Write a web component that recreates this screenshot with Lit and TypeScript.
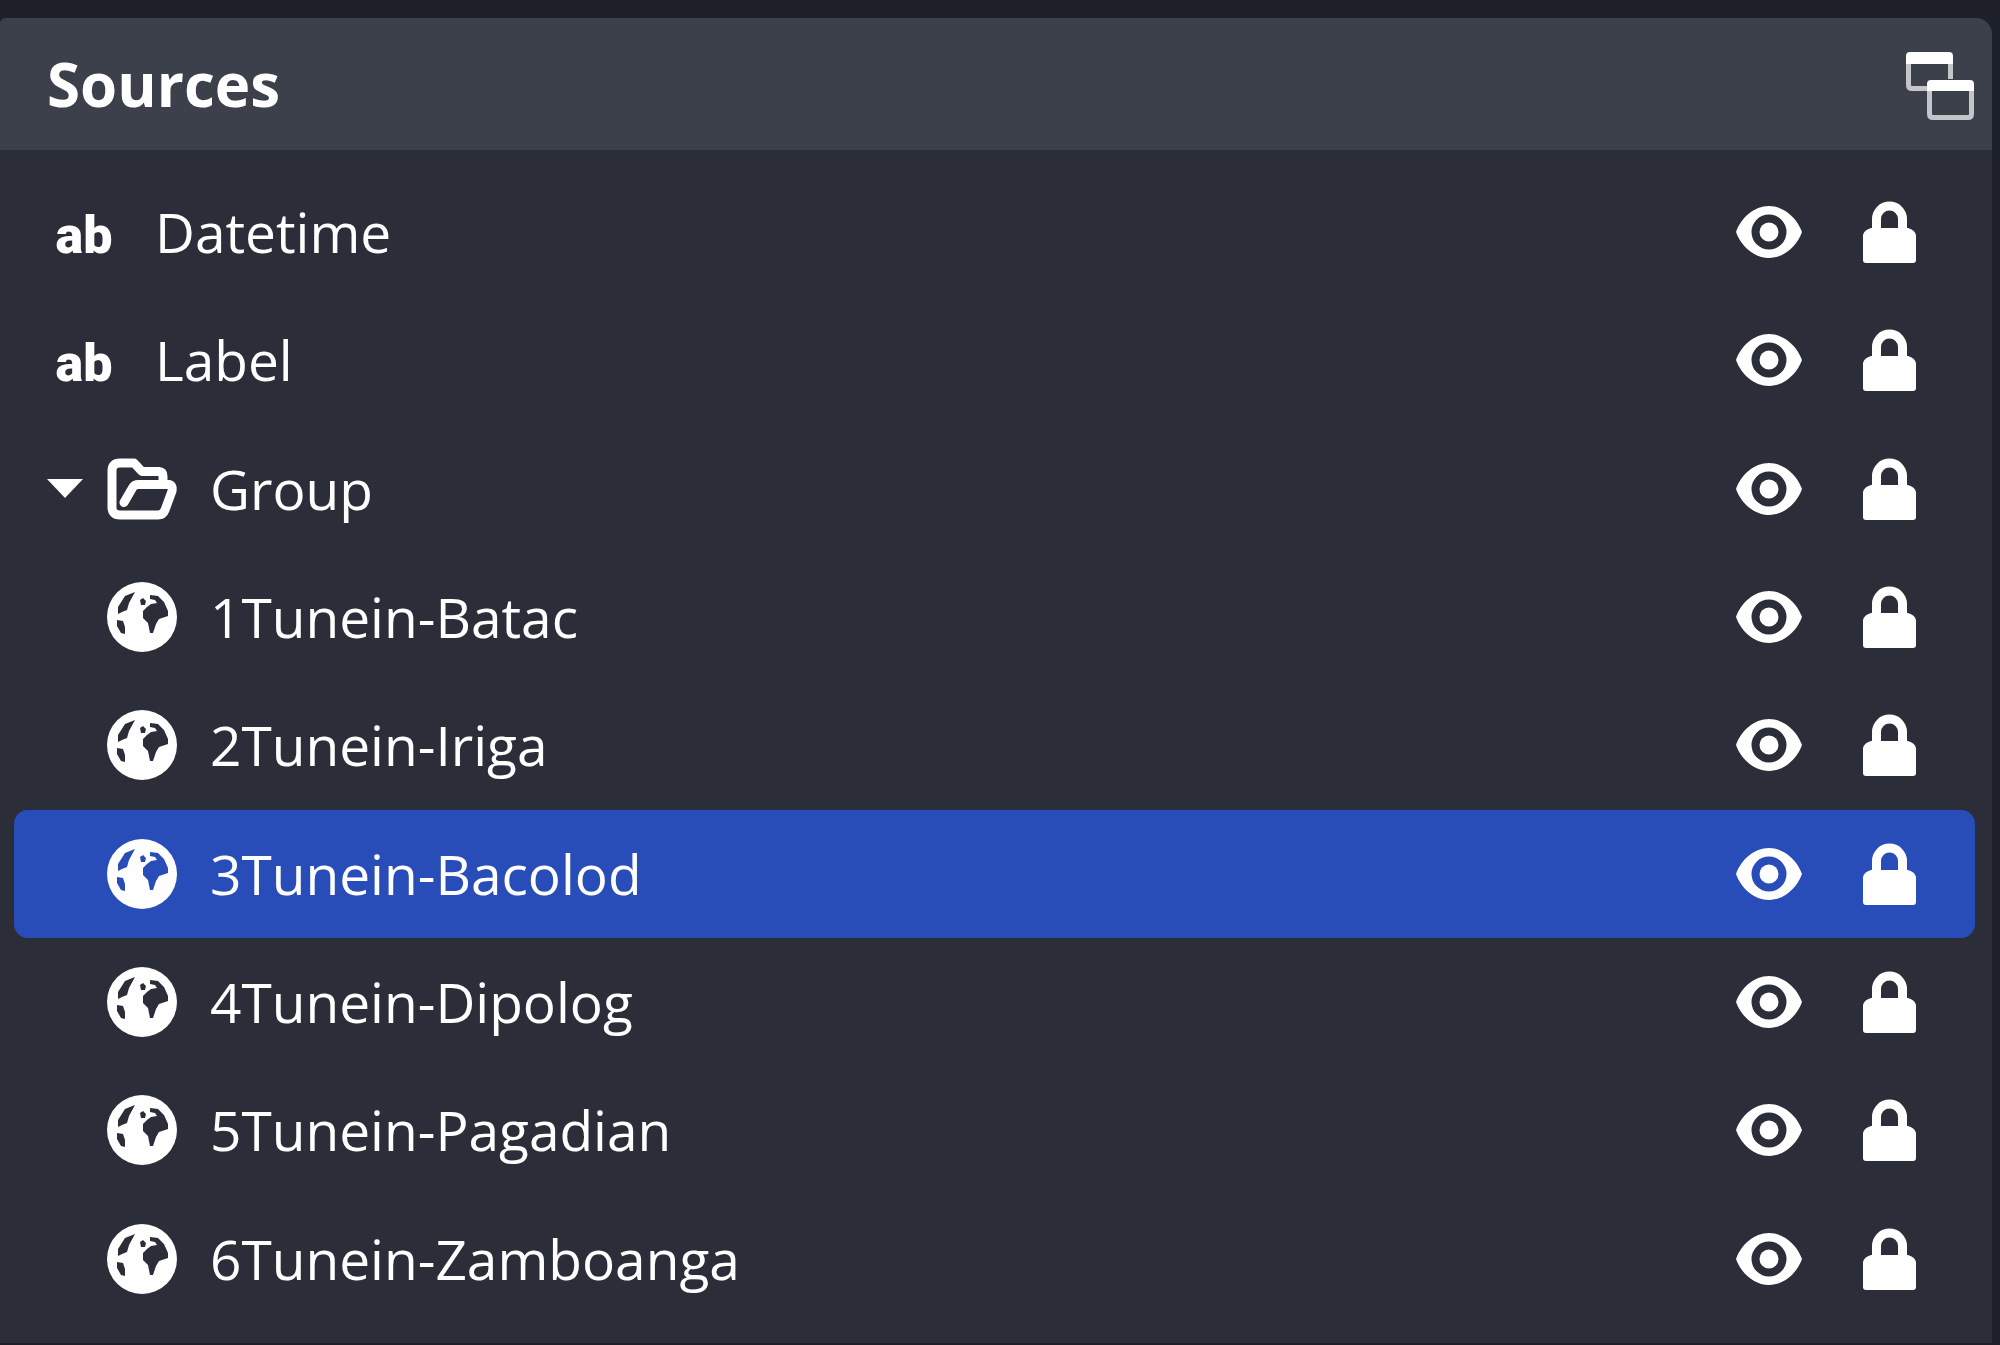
import { LitElement, html, css, svg, nothing } from "lit";
import { customElement, property, state } from "lit/decorators.js";

type Kind = "text" | "group" | "browser";

interface Source {
  name: string;
  kind: Kind;
  child?: boolean;
}

const SOURCES: Source[] = [
  { name: "Datetime", kind: "text" },
  { name: "Label", kind: "text" },
  { name: "Group", kind: "group" },
  { name: "1Tunein-Batac", kind: "browser", child: true },
  { name: "2Tunein-Iriga", kind: "browser", child: true },
  { name: "3Tunein-Bacolod", kind: "browser", child: true },
  { name: "4Tunein-Dipolog", kind: "browser", child: true },
  { name: "5Tunein-Pagadian", kind: "browser", child: true },
  { name: "6Tunein-Zamboanga", kind: "browser", child: true },
];

const ICONS = {
  eye: {
    w: 68, h: 54,
    body: svg`<path fill="currentColor" fill-rule="evenodd" d="M1 27C6 13 19 1 34 1S62 13 67 27C62 41 49 53 34 53S6 41 1 27ZM34 9.500a17.500 17.500 0 1 0 0 35a17.500 17.500 0 1 0 0-35Z"/><circle cx="34" cy="27" r="9.500" fill="currentColor"/>`,
  },
  lock: {
    w: 54, h: 62,
    body: svg`<path fill="currentColor" fill-rule="evenodd" d="M9 27V18a17.500 17.500 0 0 1 35 0v9h1q7 2 8 7v25q0 3-3 3H3q-3 0-3-3V34q1-5 8-7ZM18 27H35V18a8.500 8.500 0 0 0-17 0Z"/>`,
  },
  popout: {
    w: 70, h: 70,
    body: svg`<g fill="none" stroke="currentColor" stroke-width="5" opacity=".7"><path d="M3.500 10V34Q3.500 37.500 7 37.500H22M45.500 10V28"/><path d="M24.500 38V63Q24.500 66.500 28 66.500H63Q66.500 66.500 66.500 63V38"/></g><path fill="currentColor" d="M1 13V5Q1 1 5 1H44Q48 1 48 5V13ZM22 40V33Q22 29 26 29H65Q69 29 69 33V40Z"/>`,
  },
  folder: {
    w: 70, h: 62,
    body: svg`<path fill="none" stroke="currentColor" stroke-width="9" stroke-linejoin="round" stroke-linecap="round" d="M17 44.500L26 29Q28 26.500 31 26.500H62Q66 27 65 33L58 52Q56 57 51 57H13Q5 57 5 49V13Q5 5 13 5H27L35 13.500H52Q56 14 56 18V26"/>`,
  },
  globe: {
    w: 70, h: 70,
    body: svg`<path fill="currentColor" fill-rule="evenodd" d="M35 0a35 35 0 1 0 0 70a35 35 0 1 0 0-70ZM28 10L18 14L11 25V32L15 30L20 28L22 21ZM10 38L16 39L18 45V52L14 51L10 44ZM33 18L36 16L39 19L38 23L34 23ZM43 13L51 14L57 20L61 29V34L52 37L49 42L46 51H43L41 41L36 36V29L40 25L44 22L50 21L48 18L43 17Z"/>`,
  },
  caret: {
    w: 38, h: 20,
    body: svg`<path fill="currentColor" d="M1 0H37L19 19Z"/>`,
  },
};

const icon = (name: keyof typeof ICONS) => {
  const i = ICONS[name];
  return html`<svg width=${i.w} height=${i.h} viewBox="0 0 ${i.w} ${i.h}" aria-hidden="true">${i.body}</svg>`;
};

@customElement("source-row")
export class SourceRow extends LitElement {
  @property({ attribute: false }) source!: Source;
  @property({ type: Boolean }) selected = false;
  @property({ type: Boolean }) expanded = true;
  @state() private shown = true;
  @state() private locked = true;

  static styles = css`
    :host {
      display: flex;
      align-items: center;
      padding: 0 58px 0 31px;
      border-radius: 14px;
      color: #fefefe;
      font-size: 55px;
      line-height: 72px;
    }
    :host([selected]) {
      background: #284cb8;
    }
    svg {
      display: block;
    }
    button {
      display: flex;
      align-items: center;
      justify-content: center;
      margin: 0;
      padding: 0;
      border: 0;
      background: none;
      color: inherit;
      font: inherit;
      cursor: pointer;
    }
    .off {
      opacity: 0.4;
    }
    .twist {
      width: 40px;
      height: 40px;
      margin-right: 22px;
    }
    .collapsed svg {
      transform: rotate(-90deg);
    }
    .indent {
      width: 62px;
    }
    .kind {
      display: flex;
      width: 70px;
      margin-right: 33px;
    }
    .kind.letters {
      width: 78px;
      margin-right: 32px;
      padding-top: 8px;
      justify-content: center;
      font-family: Roboto, "Open Sans", sans-serif;
      font-size: 52px;
      font-weight: 900;
    }
    .name {
      flex: 1;
      justify-content: flex-start;
      text-align: left;
      white-space: nowrap;
    }
    .toggles {
      display: flex;
      align-items: center;
      gap: 60px;
    }
  `;

  private kindIcon() {
    const { kind } = this.source;
    if (kind === "text") return html`<span class="kind letters" aria-hidden="true">ab</span>`;
    return html`<span class="kind">${icon(kind === "group" ? "folder" : "globe")}</span>`;
  }

  render() {
    const { name, kind, child } = this.source;
    return html`
      ${kind === "group"
        ? html`<button
            class="twist ${this.expanded ? "" : "collapsed"}"
            aria-label="Expand ${name}"
            aria-expanded=${this.expanded}
            @click=${() => this.dispatchEvent(new CustomEvent("twist"))}
          >${icon("caret")}</button>`
        : nothing}
      ${child ? html`<span class="indent"></span>` : nothing}
      ${this.kindIcon()}
      <button class="name" @click=${() => this.dispatchEvent(new CustomEvent("pick"))}>${name}</button>
      <div class="toggles">
        <button
          class=${this.shown ? "" : "off"}
          aria-label="Show ${name}"
          aria-pressed=${this.shown}
          @click=${() => (this.shown = !this.shown)}
        >${icon("eye")}</button>
        <button
          class=${this.locked ? "" : "off"}
          aria-label="Lock ${name}"
          aria-pressed=${this.locked}
          @click=${() => (this.locked = !this.locked)}
        >${icon("lock")}</button>
      </div>
    `;
  }
}

@customElement("app-root")
export class AppRoot extends LitElement {
  @state() private selected = "3Tunein-Bacolod";
  @state() private expanded = true;

  static styles = css`
    :host {
      display: flex;
      flex-direction: column;
      box-sizing: border-box;
      min-height: 100vh;
      padding: 18px 8px 2px 0;
      background: #1e2029;
      color: #fefefe;
      font-family: "Open Sans", "Noto Sans", sans-serif;
    }
    .panel {
      flex: 1;
      display: flex;
      flex-direction: column;
      border-radius: 6px 16px 0 0;
      overflow: hidden;
      background: #2b2d38;
    }
    header {
      display: flex;
      align-items: center;
      justify-content: space-between;
      height: 132px;
      padding: 0 17px 0 47px;
      background: #3c404b;
    }
    h1 {
      margin: 0;
      font-size: 60px;
      line-height: 72px;
      font-weight: 700;
    }
    .popout {
      margin: 0;
      padding: 4px 0 0;
      border: 0;
      background: none;
      color: inherit;
      cursor: pointer;
    }
    .popout svg {
      display: block;
    }
    .list {
      flex: 1;
      display: grid;
      grid-auto-rows: minmax(96px, 1fr);
      margin: 0;
      padding: 18px 17px 20px 14px;
      list-style: none;
    }
    li {
      display: grid;
    }
  `;

  render() {
    const rows = SOURCES.filter((s) => this.expanded || !s.child);
    return html`
      <section class="panel">
        <header>
          <h1>Sources</h1>
          <button class="popout" aria-label="Pop out">${icon("popout")}</button>
        </header>
        <ul class="list">
          ${rows.map(
            (s) => html`<li>
              <source-row
                .source=${s}
                ?selected=${s.name === this.selected}
                .expanded=${this.expanded}
                @pick=${() => (this.selected = s.name)}
                @twist=${() => (this.expanded = !this.expanded)}
              ></source-row>
            </li>`
          )}
        </ul>
      </section>
    `;
  }
}
